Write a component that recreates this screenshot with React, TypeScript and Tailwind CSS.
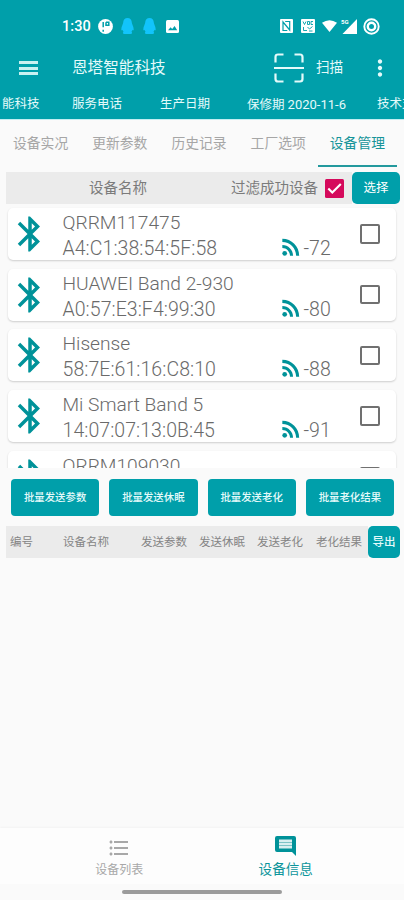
import React from "react";
import { MdBluetooth, MdRssFeed, MdMoreVert, MdFormatListBulleted } from "react-icons/md";

const tabs = ["设备实况", "更新参数", "历史记录", "工厂选项", "设备管理"];

const devices = [
  { name: "QRRM117475", mac: "A4:C1:38:54:5F:58", rssi: "-72" },
  { name: "HUAWEI Band 2-930", mac: "A0:57:E3:F4:99:30", rssi: "-80" },
  { name: "Hisense", mac: "58:7E:61:16:C8:10", rssi: "-88" },
  { name: "Mi Smart Band 5", mac: "14:07:07:13:0B:45", rssi: "-91" },
  { name: "QRRM109030" },
];

const actions = ["批量发送参数", "批量发送休眠", "批量发送老化", "批量老化结果"];

const Penguin = () => (
  <svg width="13" height="16" viewBox="0 0 13 16" fill="#12c4fb">
    <path d="M6.500 0C3.900 0 2.200 2 2.200 4.600C2.200 6 .3 8.600 .3 11.400C.3 12.600 1.100 12.500 1.600 11.700C1.800 12.600 2 13.200 2.600 13.800C1.400 14.500 1.700 16 3.400 16H9.600C11.300 16 11.600 14.500 10.400 13.800C11 13.200 11.200 12.600 11.400 11.700C11.900 12.500 12.700 12.600 12.700 11.400C12.700 8.600 10.800 6 10.800 4.600C10.800 2 9.100 0 6.500 0Z" />
  </svg>
);

const StatusBar = () => (
  <div className="flex h-[52px] items-center pl-[62px] pr-[24px] text-white">
    <span className="w-[36px] pt-[2px] text-[14.500px] font-medium tracking-[0.1px]">1:30</span>
    <svg width="15" height="15" viewBox="0 0 15 15">
      <circle cx="7.500" cy="7.500" r="7.400" fill="white" />
      <path d="M5.200 3V8.200M5.200 10.700V12.700M8 3.300V6.200H10.800V3.300H8" stroke="#009faa" strokeWidth="1.500" fill="none" />
    </svg>
    <div className="ml-[8px] flex items-center gap-[9px]">
      <Penguin />
      <Penguin />
    </div>
    <svg className="ml-[10px]" width="13" height="13" viewBox="0 0 13 13">
      <rect width="13" height="13" rx="1.500" fill="white" />
      <path d="M2 10.200L4.600 7.200L6.200 9L8.600 5.900L11.200 10.200Z" fill="#009faa" />
    </svg>

    <div className="ml-auto flex items-center">
      <svg width="13" height="14" viewBox="0 0 13 14">
        <rect width="13" height="14" rx="1" fill="white" />
        <path d="M3 12V3L9.700 11V2M5.200 2.500H9.700M3 11.500H7.300" stroke="#009faa" strokeWidth="1.200" fill="none" />
      </svg>
      <svg className="ml-[8px]" width="14" height="14" viewBox="0 0 14 14">
        <rect width="14" height="14" rx="1" fill="white" />
        <path d="M2 2.500L3.500 5.500L5 2.500M6.500 2.500H8.500V5.500H6.500ZM12 2.500H10V5.500H12M2.500 8V11.500H6M6.500 8L8.500 10L11.500 7.500M8 12H11.500" stroke="#009faa" strokeWidth="0.900" fill="none" />
      </svg>
      <svg className="ml-[7px]" width="15" height="12" viewBox="0 0 15 12">
        <path d="M0 2.800Q7.500 -2.400 15 2.800L7.500 12Z" fill="white" />
      </svg>
      <div className="relative ml-[4px] h-[15px] w-[16px]">
        <svg width="16" height="15" viewBox="0 0 16 15">
          <path d="M16 0V15H1.500Z" fill="white" />
        </svg>
        <span className="absolute left-0 top-[-1px] text-[6px] font-bold leading-[8px]">5G</span>
      </div>
      <svg className="ml-[6px]" width="17" height="17" viewBox="0 0 17 17">
        <circle cx="8.500" cy="8.500" r="7.200" fill="none" stroke="white" strokeWidth="1.900" />
        <circle cx="8.500" cy="8.500" r="3.700" fill="none" stroke="white" strokeWidth="2.400" />
      </svg>
    </div>
  </div>
);

const Header = () => (
  <div className="h-[120px] shrink-0 overflow-hidden border-b border-[#c3eef2] bg-[#009faa] text-white">
    <StatusBar />
    <div className="flex h-[32px] items-center pl-[19px] text-[#e4fafa]">
      <div className="flex w-[19px] flex-col gap-[2.500px]">
        <div className="h-[3px] bg-[#c8f1f1]" />
        <div className="h-[3px] bg-[#c8f1f1]" />
        <div className="h-[3px] bg-[#c8f1f1]" />
      </div>
      <span className="ml-[34px] w-[202px] pt-[2px] text-[15.600px]">恩塔智能科技</span>
      <svg className="-mt-[1px]" width="30" height="30" viewBox="0 0 30 30" fill="none" stroke="#e4fafa" strokeWidth="2.200">
        <path d="M1.500 9.500V4Q1.500 1.500 4 1.500H9.500M20.500 1.500H26Q28.500 1.500 28.500 4V9.500M28.500 20.500V26Q28.500 28.500 26 28.500H20.500M9.500 28.500H4Q1.500 28.500 1.500 26V20.500M0 15H30" />
      </svg>
      <span className="ml-[12px] pb-[1px] text-[13.600px]">扫描</span>
      <MdMoreVert className="ml-[24px] shrink-0" size={26} />
    </div>
    <div className="flex h-[40px] items-center whitespace-nowrap pl-[2px] pt-[1px] text-[12.500px] text-[#e4fafa]">
      <span className="w-[70px] shrink-0">能科技</span>
      <span className="w-[88px] shrink-0">服务电话</span>
      <span className="w-[87px] shrink-0">生产日期</span>
      <span className="w-[130px] shrink-0">
        保修期 <span className="text-[13px]">2020-11-6</span>
      </span>
      <span className="shrink-0">技术支持</span>
    </div>
  </div>
);

const Check = ({ checked = false }: { checked?: boolean }) =>
  checked ? (
    <svg width="19" height="19" viewBox="0 0 19 19">
      <rect width="19" height="19" rx="1.500" fill="#d50a5c" />
      <path d="M3.300 9.600L7.300 13.600L15.800 5" stroke="white" strokeWidth="2.100" fill="none" />
    </svg>
  ) : (
    <div className="h-[19.500px] w-[20px] rounded-[2px] border-2 border-[#707070]" />
  );

const Device = ({ name, mac, rssi }: { name: string; mac?: string; rssi?: string }) => (
  <div className="flex h-[52px] shrink-0 items-center rounded-[5px] bg-white pl-[1px] text-[19.500px] leading-[25px] text-[#6a6a6a] shadow-[0_1px_2px_rgba(0,0,0,0.18)]">
    <MdBluetooth className="shrink-0 text-[#009299]" size={42} />
    <div className="ml-[11.500px] h-[50px] w-[289.500px] pt-[1px] font-light">
      <div className="text-[19.200px]">{name}</div>
      {mac && (
        <div className="flex items-center pt-[1px]">
          <span className="w-[215px] tracking-[0.060px]">{mac}</span>
          <MdRssFeed className="-mt-[3px] shrink-0 text-[#009299]" size={26} />
          <span>{rssi}</span>
        </div>
      )}
    </div>
    <div className="ml-[8px]">
      <Check />
    </div>
  </div>
);

const App = () => {
  return (
    <div className="flex h-[900px] w-[404px] flex-col overflow-hidden bg-[#fafafa] font-['Roboto','Noto_Sans_CJK_SC',sans-serif]">
      <Header />

      <div className="flex h-[47px] shrink-0 pl-[1px] pr-[7px] text-[13.800px] text-[#a6a6a6]">
        {tabs.map((t) => (
          <div
            key={t}
            className="flex flex-1 items-center justify-center border-b-2 border-transparent pt-[2px] last:border-[#23999d] last:text-[#169499]"
          >
            {t}
          </div>
        ))}
      </div>

      <div className="mt-[5px] flex h-[32px] shrink-0 pl-[6px] pr-[4px] text-[14.500px] text-[#7b7b7b]">
        <div className="flex flex-1 items-center bg-[#ebebeb]">
          <span className="ml-[83px] w-[142px] pt-[2px]">设备名称</span>
          <span className="mr-[7px] pt-[2px]">过滤成功设备</span>
          <Check checked />
        </div>
        <div className="flex w-[48px] items-center justify-center rounded-[5px] bg-[#009faa] pt-[1px] text-[12.500px] text-white">
          选择
        </div>
      </div>

      <div className="flex h-[264px] shrink-0 flex-col gap-[8.700px] overflow-hidden px-[8px] pt-[4px]">
        {devices.map((d) => (
          <Device key={d.name} {...d} />
        ))}
      </div>

      <div className="mt-[11px] grid h-[37px] shrink-0 grid-cols-4 gap-[10px] pl-[11px] pr-[10px]">
        {actions.map((a) => (
          <div
            key={a}
            className="flex items-center justify-center rounded-[4px] bg-[#009faa] pt-[1px] text-[10.400px] font-medium text-[#e4fafa]"
          >
            {a}
          </div>
        ))}
      </div>

      <div className="mt-[10px] flex h-[32px] shrink-0 pl-[6px] pr-[4px] text-[11.500px] text-[#858585]">
        <div className="flex flex-1 items-center bg-[#ebebeb] pl-[4px] pt-[2px]">
          <span className="w-[53px]">编号</span>
          <span className="w-[78px]">设备名称</span>
          <span className="w-[58px]">发送参数</span>
          <span className="w-[58px]">发送休眠</span>
          <span className="w-[59px]">发送老化</span>
          <span>老化结果</span>
        </div>
        <div className="flex w-[32px] items-center justify-center rounded-[5px] bg-[#009faa] pt-[2px] font-medium text-[#e4fafa]">
          导出
        </div>
      </div>

      <div className="mt-auto flex h-[56px] shrink-0 bg-[#fdfdfd] pl-[36px] pr-[35px] shadow-[0_-1px_2px_rgba(0,0,0,0.03)]">
        <div className="flex flex-1 flex-col items-center text-[12px] text-[#a8a8a8]">
          <MdFormatListBulleted className="mt-[8px]" size={24} />
          <span className="mt-[1px] leading-[18px]">设备列表</span>
        </div>
        <div className="flex flex-1 flex-col items-center text-[13.600px] text-[#0c959b]">
          <svg className="mt-[8px]" width="21" height="20" viewBox="0 0 21 20">
            <path d="M2 0H19Q21 0 21 2V20L17 16H2Q0 16 0 14V2Q0 0 2 0Z" fill="#009299" />
            <rect x="4" y="3.500" width="13" height="9" fill="#d8eff0" />
            <path d="M4 6.500H17M4 9.500H17" stroke="#7cc3c6" strokeWidth="1" />
          </svg>
          <span className="mt-[4px] leading-[18px]">设备信息</span>
        </div>
      </div>
      <div className="flex h-[16px] shrink-0 justify-center pt-[6px]">
        <div className="h-[4px] w-[160px] rounded-full bg-[#9b9b9b]" />
      </div>
    </div>
  );
};

export default App;
